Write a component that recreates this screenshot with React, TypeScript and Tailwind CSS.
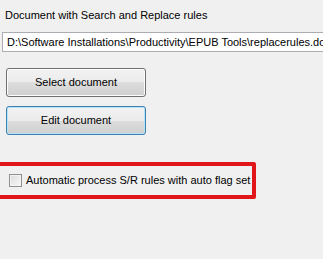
import React from 'react';

const font = { fontFamily: '"Liberation Sans", Arial, sans-serif' };

const WinButton: React.FC<{ label: string; focused?: boolean }> = ({ label, focused }) => (
  <button
    className={`w-[140px] h-[29px] rounded-[3px] border text-[11px] text-[#000] bg-[linear-gradient(to_bottom,#f2f2f2_0%,#ebebeb_50%,#dddddd_50%,#cfcfcf_100%)] ${
      focused ? 'border-[#3c7fb1] shadow-[inset_0_0_0_1px_#b6e4f8]' : 'border-[#707070] shadow-[inset_0_0_0_1px_#fcfcfc]'
    }`}
  >
    {label}
  </button>
);

export default function App() {
  return (
    <div className="w-[323px] h-[259px] bg-[#f0f0f0] overflow-hidden text-[11px] text-black" style={font}>
      <div className="pl-[5px] pt-[8px] leading-[15px] whitespace-nowrap">Document with Search and Replace rules</div>
      <div className="mt-[9px] ml-[2px] h-[20px] border border-[#abadb3] border-r-0 bg-white pl-[4px] leading-[18px] whitespace-nowrap overflow-hidden">
        D:\Software Installations\Productivity\EPUB Tools\replacerules.docx
      </div>
      <div className="flex flex-col gap-[9px] pl-[6px] pt-[16px]">
        <WinButton label="Select document" />
        <WinButton label="Edit document" focused />
      </div>
      <div className="mt-[27px] ml-[-4px] w-[260px] h-[37px] border-[4px] border-[#e0161b] rounded-[2px] flex items-center pl-[9px]">
        <span className="shrink-0 w-[13px] h-[13px] border border-[#8e8f8f] bg-[linear-gradient(135deg,#dcdcdc,#f8f8f8)] shadow-[inset_0_0_0_1px_#f4f4f4]" />
        <span className="ml-[4px] leading-[15px] whitespace-nowrap">Automatic process S/R rules with auto flag set</span>
      </div>
    </div>
  );
}
